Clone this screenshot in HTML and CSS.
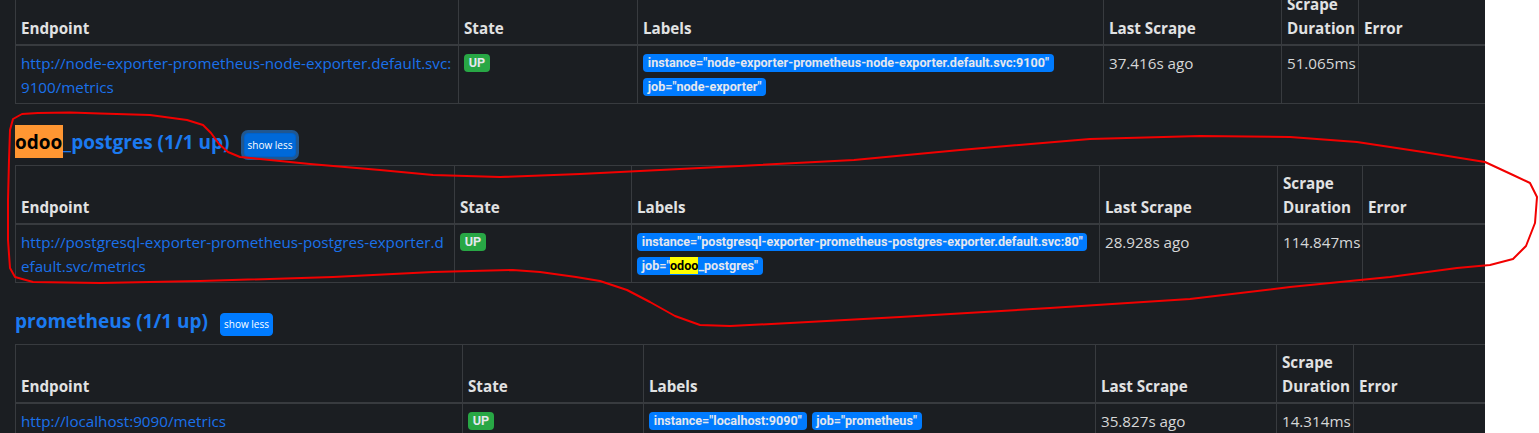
FILE: index.html
```html
<!DOCTYPE html>
<html lang="en">
<head>
<meta charset="utf-8">
<title>Targets</title>
<link rel="stylesheet" href="styles.css">
</head>
<body>
<div class="page">
  <section class="pool pool-first">
    <table class="targets t1">
      <colgroup><col class="c1"><col class="c2"><col class="c3"><col class="c4"><col class="c5"><col class="c6"></colgroup>
      <thead>
        <tr><th>Endpoint</th><th>State</th><th>Labels</th><th>Last Scrape</th><th>Scrape Duration</th><th>Error</th></tr>
      </thead>
      <tbody>
        <tr>
          <td><a class="endpoint" href="#">http://node-exporter-prometheus-node-exporter.default.svc:<br>9100/metrics</a></td>
          <td><div class="badge-list"><span class="badge badge-up">UP</span></div></td>
          <td><div class="badge-list"><span class="badge badge-label">instance="node-exporter-prometheus-node-exporter.default.svc:9100"</span><span class="badge badge-label">job="node-exporter"</span></div></td>
          <td>37.416s ago</td>
          <td>51.065ms</td>
          <td></td>
        </tr>
      </tbody>
    </table>
  </section>

  <section class="pool">
    <div class="pool-head">
      <h3 class="pool-title"><a href="#"><mark class="hl-active">odoo</mark>_postgres (1/1 up)</a></h3>
      <button class="btn btn-focus" type="button">show less</button>
    </div>
    <table class="targets t2">
      <colgroup><col class="c1"><col class="c2"><col class="c3"><col class="c4"><col class="c5"><col class="c6"></colgroup>
      <thead>
        <tr><th>Endpoint</th><th>State</th><th>Labels</th><th>Last Scrape</th><th>Scrape Duration</th><th>Error</th></tr>
      </thead>
      <tbody>
        <tr>
          <td><a class="endpoint" href="#">http://postgresql-exporter-prometheus-postgres-exporter.d<br>efault.svc/metrics</a></td>
          <td><div class="badge-list"><span class="badge badge-up">UP</span></div></td>
          <td><div class="badge-list"><span class="badge badge-label">instance="postgresql-exporter-prometheus-postgres-exporter.default.svc:80"</span><span class="badge badge-label">job="<mark class="hl">odoo</mark>_postgres"</span></div></td>
          <td>28.928s ago</td>
          <td>114.847ms</td>
          <td></td>
        </tr>
      </tbody>
    </table>
  </section>

  <section class="pool">
    <div class="pool-head">
      <h3 class="pool-title"><a href="#">prometheus (1/1 up)</a></h3>
      <button class="btn" type="button">show less</button>
    </div>
    <table class="targets t3">
      <colgroup><col class="c1"><col class="c2"><col class="c3"><col class="c4"><col class="c5"><col class="c6"></colgroup>
      <thead>
        <tr><th>Endpoint</th><th>State</th><th>Labels</th><th>Last Scrape</th><th>Scrape Duration</th><th>Error</th></tr>
      </thead>
      <tbody>
        <tr>
          <td><a class="endpoint" href="#">http://localhost:9090/metrics</a></td>
          <td><div class="badge-list"><span class="badge badge-up">UP</span></div></td>
          <td><div class="badge-list"><span class="badge badge-label">instance="localhost:9090"</span><span class="badge badge-label">job="prometheus"</span></div></td>
          <td>35.827s ago</td>
          <td>14.314ms</td>
          <td></td>
        </tr>
      </tbody>
    </table>
  </section>
</div>

<svg class="annotation" width="1539" height="433" viewBox="0 0 1539 433" aria-hidden="true">
  <path d="M38 113 L70 112.5 L100 113.5 L150 115 L187 120 L203 125 L211 133 L219 144 L228 152 L240 157 L260 159 L310 164 L380 170 L433 175 L500 177 L580 174 L700 168 L854 160 L960 150 L1090 139 L1200 136 L1290 137 L1357 142 L1423 152 L1485 162 L1513 175 L1530 183 L1537 197 L1535 223 L1526 246 L1513 259 L1490 265 L1457 268 L1390 277 L1290 287 L1190 299 L1050 308 L900 317 L790 323 L730 326 L700 325 L675 316 L650 302 L627 290 L600 281 L576 277 L540 272 L513 270 L433 272 L333 277 L200 281 L100 283 L33 282 L15 277 L10 268 L8 240 L8 200 L9 160 L10 130 L13 119 L22 114 Z"/>
</svg>
</body>
</html>
```

FILE: styles.css
```css
* {
  box-sizing: border-box;
}

html,
body {
  margin: 0;
  padding: 0;
}

body {
  position: relative;
  width: 1539px;
  height: 433px;
  overflow: hidden;
  background: #ffffff;
  font-family: "Open Sans", "Noto Sans", sans-serif;
  font-size: 15.2px;
  line-height: 24px;
  color: #d6d7d8;
}

.page {
  width: 1485px;
  height: 433px;
  overflow: hidden;
  background: #1b1e22;
  padding-left: 15px;
}

.pool-first {
  margin-top: -14px;
}

.pool-head {
  display: flex;
  align-items: center;
  height: 40px;
  margin-top: 21px;
}

.pool-title {
  margin: 0 0 6px;
  font-size: 19px;
  font-weight: 700;
  line-height: 24px;
}

.pool-title a {
  color: #1b7af0;
  text-decoration: none;
}

.hl-active {
  background: #ff9632;
  color: #000000;
  padding: 4px 1px 3px 0;
}

.hl {
  background: #ffff00;
  color: #000000;
  padding: 1px 0;
}

.btn {
  margin-left: 12px;
  height: 23px;
  padding: 0 3px;
  border: 1px solid #007bff;
  border-radius: 4px;
  background: #007bff;
  color: #ffffff;
  font-family: "Open Sans", "Noto Sans", sans-serif;
  font-size: 10px;
  line-height: 21px;
}

.btn-focus {
  margin-left: 14px;
  height: 24px;
  background: #0069d9;
  border-color: #0062cc;
  box-shadow: 0 0 0 3px rgba(38, 143, 255, 0.5);
}

.targets {
  border-collapse: collapse;
  table-layout: fixed;
  width: 1510px;
}

.targets th,
.targets td {
  border: 1px solid #383b3f;
  padding: 4.5px 5px;
  text-align: left;
  vertical-align: top;
}

.targets th {
  vertical-align: bottom;
  font-weight: 700;
  color: #e1e2e3;
  border-bottom-width: 2px;
}

.endpoint {
  color: #1a71ea;
  text-decoration: none;
}

.badge-list {
  display: flex;
  flex-wrap: wrap;
  gap: 6px 5px;
  padding-top: 3px;
}

.badge {
  display: inline-block;
  padding: 3px 4.8px;
  border-radius: 4px;
  font-family: Roboto, "Liberation Sans", sans-serif;
  font-size: 12.6px;
  font-weight: 700;
  line-height: 12px;
  color: #e4e7ee;
  white-space: nowrap;
}

.badge-up {
  background: #28a745;
}

.badge-label {
  background: #007bff;
}

.t1 .c1 { width: 443px; }
.t1 .c2 { width: 179px; }
.t1 .c3 { width: 466px; }
.t1 .c4 { width: 178px; }
.t1 .c5 { width: 77px; }

.t2 .c1 { width: 439px; }
.t2 .c2 { width: 177px; }
.t2 .c3 { width: 468px; }
.t2 .c4 { width: 178px; }
.t2 .c5 { width: 85px; }

.t3 .c1 { width: 447px; }
.t3 .c2 { width: 181px; }
.t3 .c3 { width: 452px; }
.t3 .c4 { width: 181px; }
.t3 .c5 { width: 77px; }

.annotation {
  position: absolute;
  top: 0;
  left: 0;
  pointer-events: none;
}

.annotation path {
  fill: none;
  stroke: #f20000;
  stroke-width: 2;
  stroke-linejoin: round;
  stroke-linecap: round;
}
```
